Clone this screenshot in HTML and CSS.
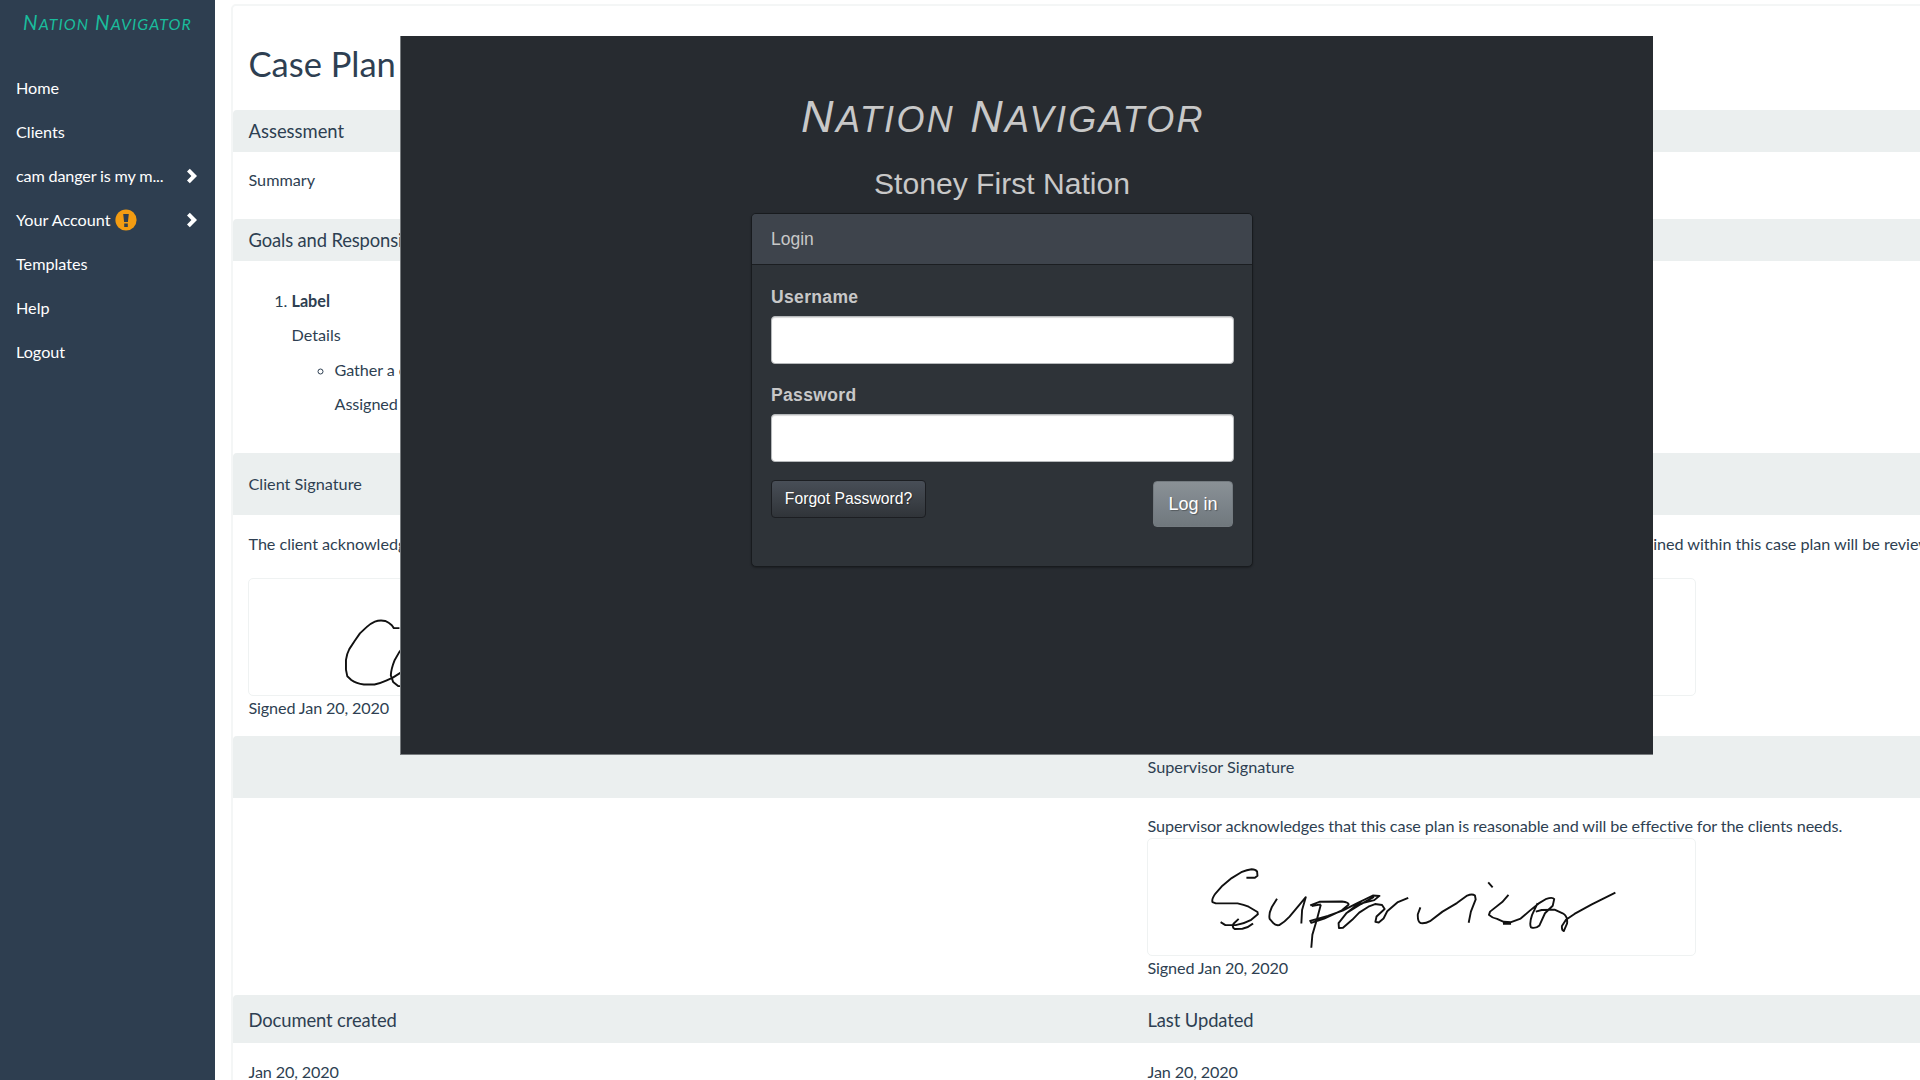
FILE: index.html
```html
<!DOCTYPE html>
<html lang="en">
<head>
<meta charset="utf-8">
<title>Nation Navigator</title>
<link rel="stylesheet" href="styles.css">
</head>
<body>
<div class="app">
  <aside class="sidebar">
    <div class="brand">N<span>ation</span> N<span>avigator</span></div>
    <nav class="nav">
      <a class="nav-item">Home</a>
      <a class="nav-item">Clients</a>
      <a class="nav-item"><span class="client-name">cam danger is my m...</span>
        <svg class="chevron" viewBox="0 0 12 16"><path d="M1 3.6 3.8.8 11 8l-7.200 7.200L1 12.400 5.400 8z"/></svg></a>
      <a class="nav-item"><span>Your Account</span>
        <svg class="alert" viewBox="0 0 22 22"><circle cx="11" cy="11" r="10.600"/><path d="M8.200 5h5.600l-.9 8H9.100zM9.200 14.600h3.600V18H9.200z"/></svg>
        <svg class="chevron" viewBox="0 0 12 16"><path d="M1 3.6 3.8.8 11 8l-7.200 7.200L1 12.400 5.400 8z"/></svg></a>
      <a class="nav-item">Templates</a>
      <a class="nav-item">Help</a>
      <a class="nav-item">Logout</a>
    </nav>
  </aside>
  <main class="plan">
    <h1 class="title">Case Plan</h1>
    <h2 class="band">Assessment</h2>
    <p class="summary">Summary</p>
    <h2 class="band band-goals">Goals and Responsibilities</h2>
    <ol class="goals">
      <li><strong>Label</strong>
        <div>Details</div>
        <ul class="tasks"><li>Gather a c<div>Assigned</div></li></ul>
      </li>
    </ol>
    <div class="band band-tall"><span>Client Signature</span></div>
    <div class="row row-client">
      <section>
        <p>The client acknowledges</p>
        <svg class="signature" viewBox="87 413 1647 354" preserveAspectRatio="none">
          <path d="M540 563H523L517 554Q508 546 497 541Q480 538 466 543Q452 549 441 560L421 579L405 602L389 627Q381 642 379 660V690L383 710L395 721Q410 732 433 735H465Q485 730 500 723L520 714L545 698M560 610L539 637L525 662Q515 687 514 707L521 727L537 740H555"/>
        </svg>
        <p class="signed">Signed Jan 20, 2020</p>
      </section>
      <section>
        <p class="review">outlined within this case plan will be reviewed</p>
        <div class="signature"></div>
      </section>
    </div>
    <div class="band band-tall"><span></span><span>Supervisor Signature</span></div>
    <div class="row row-supervisor">
      <section></section>
      <section>
        <p class="statement">Supervisor acknowledges that this case plan is reasonable and will be effective for the clients needs.</p>
        <svg class="signature" viewBox="22 324 1484 353" preserveAspectRatio="none">
          <path d="M289 442H312L319 436 318 423Q314 416 303 416Q291 417 275 425L249 443 224 466 205 490Q194 507 197 516L206 520H265Q282 524 295 530L319 546 320 553 302 570Q282 582 260 586H232L219 577M268 567L254 582Q249 592 257 598L278 597Q295 593 307 581M372 506L358 531Q349 552 352 567L362 580Q368 588 378 586Q393 576 406 560L436 520 450 501 440 540 438 581M466 528L491 523M491 523L480 570 468 615 465 655M462 526L487 515 548 514Q568 517 566 524L548 541 500 566 465 579 462 573 510 558 550 542 590 519 632 496 650 497 636 510 590 523 561 549 539 580 540 595 551 594 576 570 595 548 620 530 638 522 657 525 664 537 642 560 639 576 648 578 661 566 671 544 700 516 728 503M561 549L600 522 635 500M761 532L754 553Q753 576 762 580Q774 582 787 574L821 545 860 519 888 496Q902 490 909 496L911 508 898 545 892 579M945 456L957 471M1000 494L983 516 950 545 947 555Q955 564 969 567L987 576 1007 577 1033 566 1058 542 1082 520 1103 506Q1120 500 1124 507L1120 527 1099 550 1084 587Q1073 598 1061 593Q1056 581 1064 555L1079 519M985 582H1007M988 578H1004M1074 545L1090 540 1125 539 1147 550Q1161 558 1159 581L1150 604Q1144 602 1145 589L1156 570 1179 552 1226 523 1290 487"/>
        </svg>
        <p class="signed">Signed Jan 20, 2020</p>
      </section>
    </div>
    <div class="band band-dates"><span>Document created</span><span>Last Updated</span></div>
    <div class="dates"><span>Jan 20, 2020</span><span>Jan 20, 2020</span></div>
  </main>
</div>
<div class="login-window">
  <form class="login">
    <div class="login-brand">N<span>ation</span> N<span>avigator</span></div>
    <div class="login-org">Stoney First Nation</div>
    <div class="panel">
      <div class="panel-head">Login</div>
      <div class="panel-body">
        <label for="user">Username</label>
        <input id="user" type="text">
        <label for="pass">Password</label>
        <input id="pass" type="password">
        <div class="actions">
          <button class="btn-forgot" type="button">Forgot Password?</button>
          <button class="btn-login" type="button">Log in</button>
        </div>
      </div>
    </div>
  </form>
</div>
</body>
</html>
```
FILE: styles.css
```css
* { box-sizing: border-box; }
body { margin: 0; width: 1920px; height: 1080px; overflow: hidden; background: #fff; color: #2e3f52; font: 16.2px/24px Lato, sans-serif; }
p, h1, h2 { margin: 0; font-weight: 400; }
.app { display: flex; height: 1080px; overflow: hidden; }

.sidebar { flex: 0 0 215px; background: #2e3e50; color: #fff; }
.brand { height: 65.7px; padding-top: 10px; text-align: center; font-size: 20.5px; font-style: italic; letter-spacing: 1.05px; color: #1abc9c; }
.brand span { font-size: .78em; text-transform: uppercase; }
.nav-item { display: flex; align-items: center; height: 44.1px; padding: 0 17px 0 16px; }
.client-name { letter-spacing: -.17px; }
.chevron { width: 12px; height: 16px; margin-left: auto; fill: #fff; }
.alert { width: 22px; height: 22px; margin-left: 4px; }
.alert circle { fill: #f39c12; }
.alert path { fill: #2e3e50; }

.plan { flex: none; width: 1800px; height: 1400px; margin: 4px 0 0 16px; border: 2px solid #f4f6f6; border-radius: 5px; }
.title { height: 104px; padding: 34px 0 0 15.5px; font-size: 34.5px; line-height: 48px; }
.band { display: flex; align-items: center; height: 42px; padding-left: 15.5px; background: #ebefef; border-radius: 4px 4px 0 0; font-size: 18.4px; }
.band-goals { letter-spacing: -.14px; }
.band span { flex: 0 0 899px; }
.summary { height: 67px; padding: 16px 15.5px; }
.goals { height: 192px; margin: 0; padding: 23px 0 0 58.5px; line-height: 34.3px; }
.tasks { margin: 0; padding-left: 43px; list-style: circle; letter-spacing: -.08px; }
.band-tall { height: 62px; padding-bottom: 1px; font-size: 16.25px; }
.row { display: flex; padding-left: 15.5px; }
.row section { flex: 0 0 899px; white-space: nowrap; }
.row-client { height: 221px; padding-top: 16.5px; letter-spacing: -.04px; }
.row-supervisor { height: 197px; padding-top: 16px; }
.statement { letter-spacing: -.11px; }
.signature { display: block; width: 549px; height: 118px; margin-left: -.5px; border: 1.5px solid #eff2f2; border-radius: 5px; }
.signature path { fill: none; stroke: #111; stroke-width: 1.9px; stroke-linejoin: round; vector-effect: non-scaling-stroke; }
.row-client .signature { margin: 22.5px 0 0 -.5px; }
.signed { letter-spacing: -.14px; }
.review { padding-left: 478px; }
.band-dates { height: 48px; padding-top: 1px; letter-spacing: -.11px; }
.dates { display: flex; padding: 17px 15.5px; letter-spacing: -.14px; }
.dates span { flex: 0 0 899px; }

.login-window { position: absolute; left: 400px; top: 36px; width: 1253px; height: 719px; background: #272b30; border: solid #777b7e; border-width: 0 0 1px 1px; font-family: "Liberation Sans", Arial, sans-serif; color: #c8c8c8; }
.login { width: 502px; margin-left: 350px; }
.login-brand { height: 108px; padding: 54px 0 0 2px; text-align: center; white-space: nowrap; font-size: 45px; line-height: 54px; font-style: italic; letter-spacing: 2.4px; }
.login-brand span { font-size: .8em; line-height: 1; text-transform: uppercase; }
.login-org { margin-top: 22px; text-align: center; font-size: 30.1px; line-height: 36px; }
.panel { margin-top: 11px; height: 354px; background: #2e3338; border: 1.5px solid #181b1e; border-radius: 5px; box-shadow: 0 1px 2px rgba(0,0,0,.3); }
.panel-head { height: 51px; padding: 0 19px; background: #3e444c; border-bottom: 1.5px solid #1b1e21; border-radius: 4px 4px 0 0; font-size: 17.5px; line-height: 51px; }
.panel-body { padding: 19px 19px; }
label { display: block; height: 32px; font-size: 17.5px; line-height: 27px; font-weight: 700; letter-spacing: .35px; }
input { display: block; width: 463px; height: 48px; margin-bottom: 18px; background: #fff; border: 1px solid #b6b9bb; border-radius: 4px; box-shadow: inset 0 1px 1px rgba(0,0,0,.15); }
.actions { display: flex; justify-content: space-between; align-items: flex-start; }
button { font-family: inherit; color: #fff; padding: 0; border-radius: 4px; text-shadow: 1px 1px 1px rgba(0,0,0,.3); }
.btn-forgot { width: 155px; height: 38px; background: linear-gradient(#484e57, #3a3f45 60%, #303439); border: 1.5px solid #1c1e22; font-size: 15.7px; }
.btn-login { width: 80px; height: 46px; margin-top: 1px; background: linear-gradient(#8a9196, #7a8288 60%, #70787d); border: 1px solid #747b80; font-size: 18px; }
```
